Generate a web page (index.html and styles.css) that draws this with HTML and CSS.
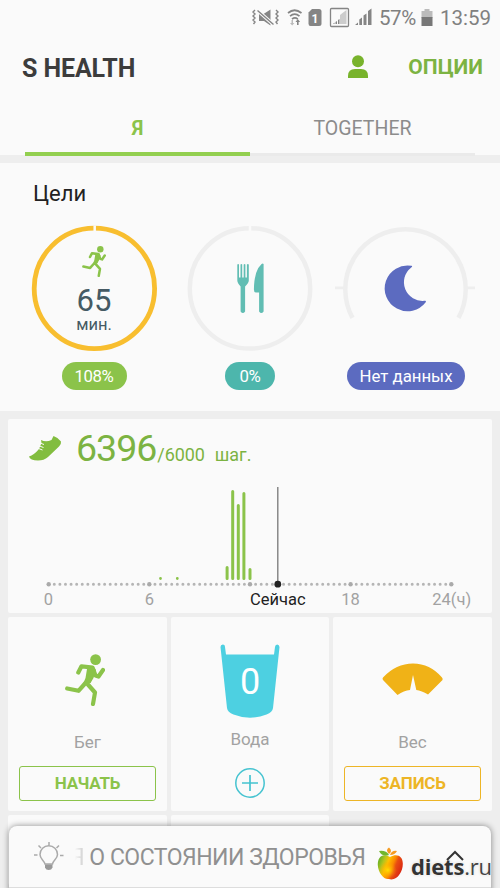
FILE: index.html
```html
<!DOCTYPE html>
<html lang="ru">
<head>
<meta charset="utf-8">
<title>S Health</title>
<link rel="stylesheet" href="styles.css">
</head>
<body>
<svg class="defs" width="0" height="0" aria-hidden="true">
  <symbol id="runner" viewBox="0 0 40 52">
    <circle cx="30.6" cy="5.6" r="5.4" fill="currentColor"/>
    <path d="M16.500 11.500 28 12 31 16 28.500 24 25.500 29 18 30 20.500 24 22 15Z" fill="currentColor"/>
    <path d="M13.300 18.500 16.500 12.300 27.500 13.500 30.500 21.500 33.500 22.500 38 16M27 16 24 27M22.500 30 30 38.500 28 50M20.500 29 13.500 36.800 2.200 34.500" fill="none" stroke="currentColor" stroke-width="4.200" stroke-linecap="round" stroke-linejoin="round"/>
  </symbol>
</svg>
<div class="screen">
  <header class="status">
    <svg class="status-icons" width="126" height="36" viewBox="250 0 126 36">
      <g fill="#858585">
        <path d="M259 14h4.500l7-4.500v16l-6.500-4.500h-5z"/>
        <path d="M257 10 274 25" stroke="#fafafa" stroke-width="3.500"/>
        <path d="M257.500 10.500 273.500 24.500M255 10l-2 2 2 2-2 2 2 2-2 2 2 2-1.500 2M276 10l2 2-2 2 2 2-2 2 2 2-2 2 1.500 2" fill="none" stroke="#858585" stroke-width="1.400"/>
        <path d="M288 13q6.500-5.500 13.500 0M290 16.200q4.700-4 9.500 0M292 19.200q3-2.500 5.800 0" fill="none" stroke="#858585" stroke-width="1.700"/>
        <path d="M297 25v-3h-1.500l2.300-3 2.300 3h-1.500v3z"/><path d="M291.500 20v3H290l2.200 2.500 2.200-2.500H293v-3z" fill="#bbb"/>
        <path d="M312 9h7q2.500 0 2.500 2.500v12q0 2.500-2.500 2.500h-8.500q-2 0-2-2.500V12.500z"/>
      </g>
      <text x="311.500" y="22.500" class="sim">1</text>
      <rect x="330.500" y="8.500" width="18" height="18" rx="1" fill="none" stroke="#858585" stroke-width="1.300"/>
      <path d="M340 24V15l2.500-2v11zM342.500 24V13l4-3v14z" fill="#ccc"/>
      <path d="M333 24l1.500-1.500V24zM335.500 24v-2l1.500-1V24zM338 24v-4l1.500-1v5z" fill="#858585"/>
      <path d="M355 25l3-2.500V25zM359.300 25v-5.500l2.700-2V25zM363.500 25v-9.500l3-2V25zM368 25V11l3.500-2.500V25z" fill="#858585"/>
    </svg>
    <span class="battery-level">57%</span>
    <svg class="battery" width="12" height="18" viewBox="0 0 12 18"><path d="M.5 2H3.500V0H8.500V2H11.500V9H.5z" fill="#bbb"/><path d="M.5 8h11v9H.5z" fill="#777"/></svg>
    <span class="clock">13:59</span>
  </header>

  <div class="appbar">
    <h1>S HEALTH</h1>
    <svg class="person" width="22" height="24" viewBox="0 0 22 24" fill="#78b32c"><circle cx="11" cy="6.300" r="6"/><path d="M1 23v-2q0-7 7-7h6q7 0 7 7v2z"/></svg>
    <span class="options">ОПЦИИ</span>
  </div>
  <nav class="tabs">
    <span class="tab active">Я</span>
    <span class="tab">TOGETHER</span>
  </nav>

  <section class="goals">
    <h2>Цели</h2>
    <div class="goal-row">
      <div class="goal">
        <div class="dial">
          <svg class="ring" viewBox="-.4 -.4 126 126"><circle cx="63" cy="63" r="60.200" fill="none" stroke="#f8be2f" stroke-width="4.800"/><path d="M63.300 0v6" stroke="#fafafa" stroke-width="2.500"/></svg>
          <svg class="runner-small"><use href="#runner"/></svg>
          <strong>65</strong>
          <span class="unit">мин.</span>
        </div>
        <span class="pill green">108%</span>
      </div>
      <div class="goal">
        <div class="dial">
          <svg class="ring" viewBox="0 -.4 126 126"><circle cx="63" cy="63" r="60.200" fill="none" stroke="#eee" stroke-width="4.500"/><path d="M63 0v6" stroke="#fafafa" stroke-width="2.500"/>
            <g fill="#61bdb3"><path d="M50.300 39q1-.8 1.700 0V52h1.500V39q1-.8 1.700 0V52h1.500V39q1-.8 1.700 0V52h1.500V39q1-.8 1.900 0V55q0 2.500-3.700 6V86q-2.200 3-4.500 0V61q-3.300-3.500-3.300-6z"/><path d="M76.600 38.500V86q-2.300 3-4.500 0V67h-3.500q-1.700-.5-1.700-3 .3-19 7.700-25.500 1-.8 2 0z"/></g></svg>
        </div>
        <span class="pill teal">0%</span>
      </div>
      <div class="goal">
        <div class="dial">
          <svg class="ring" viewBox="0 -.4 126 126"><path d="M9.500 92.500A60.200 60.200 0 1 1 115.500 92.500" fill="none" stroke="#eee" stroke-width="4.500"/><path d="M-8 62.500H2M124 62.500h8" stroke="#eee" stroke-width="2.600"/>
            <path d="M68.500 40.400A22.900 22.900 0 1 0 82.900 76.700Q83.200 74.800 81.500 75.400A18.600 18.600 0 0 1 68 42.300Q70 41 68.500 40.400Z" fill="#5c6bc0"/></svg>
        </div>
        <span class="pill indigo">Нет данных</span>
      </div>
    </div>
  </section>

  <section class="card steps">
    <div class="steps-head">
      <svg class="shoe" width="34" height="26" viewBox="0 0 34 26"><path d="M1 21.500Q6 20 11 14L13.500 8 13 5Q18 7.500 23.500 5L25.500 1Q30 2.500 33 6.500Q33.500 9 31 11.500L20 22Q16 25.500 10 25.500 2 25.500 1 21.500Z" fill="#82bd3f"/><path d="M12 8l4 1.500M11.500 11l4 1.500M10.500 13.500l4 1.500" stroke="#fafafa" stroke-width="1"/></svg>
      <span class="count">6396</span><span class="target">/6000</span><span class="steps-unit">шаг.</span>
    </div>
    <svg class="chart" width="484" height="133" viewBox="8 480 484 133">
      <g stroke="#8bc34a" stroke-width="3" stroke-linecap="round">
        <path d="M160.500 578.500v.1M177.300 578.500v.1" stroke-width="2.800"/>
        <path d="M227.100 567.500V578.500M232.700 491.500V578.500M238.300 505.500V578.500M243.900 493.500V578.500M250 569.500V578.500"/>
      </g>
      <path d="M48.700 584.200H451.600" stroke="#b5b5b5" stroke-width="3" stroke-linecap="round" stroke-dasharray="0 5.592"/>
      <g fill="#aaa"><circle cx="48.700" cy="584.200" r="2.200"/><circle cx="149.300" cy="584.200" r="2.200"/><circle cx="250" cy="584.200" r="2.200"/><circle cx="350.600" cy="584.200" r="2.200"/><circle cx="451.300" cy="584.200" r="2.200"/></g>
      <path d="M277.800 487V584" stroke="#777" stroke-width="1.300"/><circle cx="277.800" cy="584.200" r="3.400" fill="#222"/>
      <g class="axis"><text x="48.500" y="605">0</text><text x="149.300" y="605">6</text><text class="now" x="277.800" y="605">Сейчас</text><text x="350.500" y="605">18</text><text x="451.700" y="605">24(ч)</text></g>
    </svg>
  </section>

  <section class="tiles">
    <article class="card tile">
      <svg class="runner-big"><use href="#runner"/></svg>
      <span class="label">Бег</span>
      <span class="btn btn-green">НАЧАТЬ</span>
    </article>
    <article class="card tile water">
      <div class="cup">
        <svg width="60" height="75" viewBox="0 0 60 75"><path d="M.5 3Q.5 .5 2.800.5T5 3L6 10.500H54L55 3Q55.200.5 57.200.5T59.500 3L53 64Q52.500 68 46.500 70.500Q30 77 13.500 70.500 7.500 68 7 64Z" fill="#4dd0e1"/></svg>
        <span class="cups">0</span>
      </div>
      <span class="label">Вода</span>
      <svg class="plus" width="32" height="32" viewBox="0 0 32 32" fill="none" stroke="#45c3d0" stroke-width="1.500"><circle cx="16" cy="16" r="14.200"/><path d="M16 8V24M8 16H24" stroke-width="1.700"/></svg>
    </article>
    <article class="card tile weight">
      <svg class="scale" width="62" height="33" viewBox="0 0 62 33"><path d="M1 17Q0 15.800 1 14.500Q14 .5 31 .5T60 14.500Q61 15.800 60.500 17L46 31.500Q39.500 27.500 34.300 27L31 12 28 27Q22 27.500 15.500 32Z" fill="#f0b217"/></svg>
      <span class="label">Вес</span>
      <span class="btn btn-amber">ЗАПИСЬ</span>
    </article>
    <article class="card tile"></article>
    <article class="card tile"></article>
  </section>

  <aside class="sheet">
    <svg class="bulb" width="32" height="30" viewBox="0 0 32 30" fill="none" stroke="#aaa" stroke-width="1.500"><path d="M12 22C11 18 7 17 7 12.500A8.700 8.700 0 0 1 24.500 12.500C24.500 17 20 18 19.500 22Z"/><path d="M16 0V3.500M5.500 3.500l2.500 2.500M26 3.500l-2.500 2.500M1 13H4.500M27 13.500h3.500"/><path d="M12 22.500h7.500v3q-1 2.500-3.800 2.500T12 25.500z" fill="#999" stroke="none"/></svg>
    <span class="ticker"><span class="fade">Я</span> О СОСТОЯНИИ ЗДОРОВЬЯ</span>
    <div class="next-line"></div>
    <div class="brand">
      <svg width="27" height="34" viewBox="0 0 27 34">
        <defs><linearGradient id="apple" x1="0" x2="1" y1=".2" y2=".6"><stop offset="0" stop-color="#5fae24"/><stop offset=".22" stop-color="#b5c51e"/><stop offset=".38" stop-color="#ffc000"/><stop offset=".58" stop-color="#fb8a00"/><stop offset=".7" stop-color="#e94d12"/><stop offset="1" stop-color="#d92312"/></linearGradient><radialGradient id="shine" cx=".4" cy=".62" r=".36"><stop offset="0" stop-color="#ffe100"/><stop offset="1" stop-color="#ff9800" stop-opacity="0"/></radialGradient></defs>
        <path d="M13 10C5 5 .5 11 .8 18c.4 8 6.200 15 11 14 8 2.500 14-7 14-15C26 9 20 6 13 10z" fill="url(#apple)"/>
        <path d="M13 10C5 5 .5 11 .8 18c.4 8 6.200 15 11 14 8 2.500 14-7 14-15C26 9 20 6 13 10z" fill="url(#shine)"/>
        <path d="M2 4Q9 3 12 8 5 10 2 4Z" fill="#72b62c"/><path d="M12 7Q8 3 12 .5 16 4 12 7ZM13 8Q15 3 20 4 18 8 13 8Z" fill="#f59b22"/>
      </svg>
      <span class="brand-name"><b>diets</b><i>.ru</i></span>
      <svg class="chevron" width="20" height="12" viewBox="0 0 20 12"><path d="M2 10 10 2 18 10" fill="none" stroke="#333" stroke-width="2"/></svg>
    </div>
  </aside>
</div>
</body>
</html>
```
FILE: styles.css
```css
* { box-sizing: border-box; }
body { margin: 0; background: #eee; font-family: Roboto, "Liberation Sans", sans-serif; }
.defs { position: absolute; }
.screen { width: 500px; height: 888px; overflow: hidden; position: relative; background: #eee; }
svg { display: block; flex: none; }

.status { height: 36px; display: flex; align-items: center; padding-left: 250px; background: #fafafa; color: #808080; font-size: 20.500px; line-height: 36px; }
.sim { font: bold 12px Roboto, sans-serif; fill: #fff; }
.battery-level { width: 42px; padding-left: 3px; white-space: nowrap; letter-spacing: -.4px; }
.battery { margin-left: 3px; }
.clock { margin-left: 7px; }

.appbar { height: 64px; padding: 0 17px 0 22px; display: flex; align-items: center; background: #fafafa; }
.appbar h1 { margin: 0; flex: 1; font-size: 25px; line-height: 65px; padding-top: 1px; color: #3c3c3c; font-weight: 700; letter-spacing: -.1px; }
.person { margin-right: 39px; position: relative; top: -1px; }
.options { color: #7cb342; font-size: 21px; line-height: 26px; padding-bottom: 2px; font-weight: 700; }
.tabs { height: 55px; display: flex; padding: 0 25px; background: #fafafa; }
.tab { flex: 1; text-align: center; line-height: 57px; font-size: 19.500px; color: #8c8c8c; border-bottom: 3px solid #eaeaea; height: 56px; }
.tab.active { color: #8bc34a; font-weight: 700; border-bottom: 4px solid #92cf4f; }

.goals { margin-top: 8px; height: 248px; background: #fafafa; padding: 16px 16px 0; }
.goals h2 { margin: 0 0 0 17px; font-size: 22px; line-height: 30px; font-weight: 400; color: #222; }
.goal-row { display: grid; grid-template-columns: repeat(3, 156px); margin-top: 16px; }
.goal { display: flex; flex-direction: column; align-items: center; }
.dial { width: 126px; height: 126px; display: flex; flex-direction: column; align-items: center; position: relative; }
.ring { position: absolute; left: 0; top: 0; width: 126px; height: 126px; overflow: visible; }
.runner-small { width: 24px; height: 31px; margin-top: 21px; color: #8bc34a; }
.dial strong { font-size: 31px; line-height: 34px; margin-top: 7px; font-weight: 400; color: #455a64; }
.unit { font-size: 16.500px; line-height: 15px; margin-top: -1px; color: #455a64; }
.pill { margin-top: 11px; height: 28px; line-height: 29px; border-radius: 14px; color: #fff; font-size: 16.800px; text-align: center; white-space: nowrap; }
.green { width: 65px; background: #8bc34a; letter-spacing: -.4px; }
.teal { width: 50px; background: #4db6ac; letter-spacing: -.4px; }
.indigo { width: 118px; background: #5c6bc0; }

.card { background: #fafafa; border-radius: 2px; }
.steps { margin: 8px 8px 0; height: 194px; }
.steps-head { height: 61px; padding-left: 20px; display: flex; align-items: baseline; color: #7cb342; white-space: nowrap; }
.count { font-size: 37.500px; line-height: 59px; margin-left: 14px; letter-spacing: -1px; }
.target, .steps-unit { font-size: 18px; }
.target { margin-left: 1px; letter-spacing: -.1px; }
.steps-unit { margin-left: 10px; }
.axis { font-size: 16.500px; fill: #a2a2a2; text-anchor: middle; }
.axis .now { fill: #222; }

.tiles { margin: 4px 8px 0; display: grid; grid-template-columns: 159px 158px 159px; gap: 4px; grid-template-rows: 194px 70px; }
.tile { display: flex; flex-direction: column; align-items: center; }
.runner-big { width: 40px; height: 52px; margin: 37px 5px 0 0; color: #8bc34a; }
.label { font-size: 17px; line-height: 24px; color: #a2a2a2; margin-top: 24px; }
.btn { width: 137px; height: 35px; border: 1.500px solid; border-radius: 3px; margin-top: 12px; text-align: center; line-height: 33px; font-size: 17px; font-weight: 700; letter-spacing: -.2px; }
.btn-green { color: #8bc34a; }
.btn-amber { color: #edb526; }
.cup { margin-top: 27px; display: grid; }
.cup > * { grid-area: 1 / 1; }
.cups { color: #fff; font-size: 36px; line-height: 76px; height: 75px; text-align: center; font-weight: 400; }
.water .label { margin-top: 8px; }
.plus { margin-top: 16px; }
.scale { margin-top: 46px; }
.weight .label { margin-top: 34px; }

.sheet { position: absolute; left: 9px; top: 826px; width: 482px; height: 70px; background: #fafafa; border-radius: 8px 8px 0 0; box-shadow: 0 0 6px rgba(0,0,0,.45); padding: 16px 0 0 24px; display: flex; align-items: flex-start; }
.ticker { margin-left: 5px; font-size: 23px; line-height: 31px; color: #909090; white-space: nowrap; letter-spacing: -.5px; }
.fade { background: linear-gradient(90deg, transparent 35%, #ccc); -webkit-background-clip: text; background-clip: text; color: transparent; }
.next-line { position: absolute; left: 0; right: 0; top: 61px; height: 1px; background: #ddd; }
.brand { position: absolute; left: 368px; top: 21px; display: flex; }
.brand-name { font-family: "Open Sans", sans-serif; font-size: 22px; line-height: 38px; margin-left: 7px; color: #333; white-space: nowrap; letter-spacing: -.2px; text-shadow: 0 0 2px #fff, 0 0 3px #ccc; }
.brand-name b { font-weight: 700; }
.brand-name i { font-style: normal; color: #444; }
.chevron { position: absolute; left: 68px; top: 3px; }
```
